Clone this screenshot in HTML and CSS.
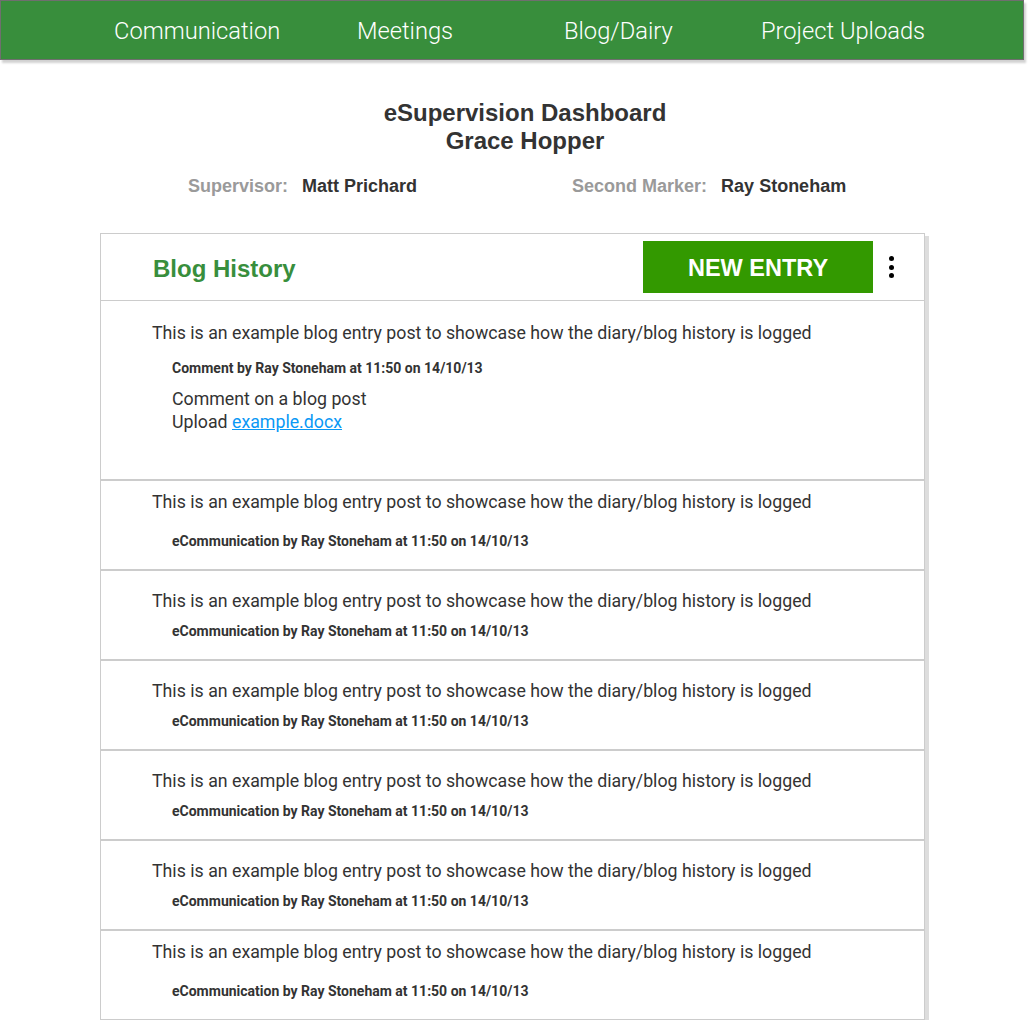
FILE: index.html
```html
<!DOCTYPE html>
<html lang="en">
<head>
<meta charset="utf-8">
<title>eSupervision Dashboard</title>
<link rel="stylesheet" href="styles.css">
</head>
<body>
<nav class="topnav">
  <a class="nav-item" href="#">Communication</a>
  <a class="nav-item" href="#">Meetings</a>
  <a class="nav-item" href="#">Blog/Dairy</a>
  <a class="nav-item" href="#">Project Uploads</a>
</nav>

<header class="page-head">
  <h1 class="title">eSupervision Dashboard<br>Grace Hopper</h1>
  <div class="people">
    <div class="person"><span class="label">Supervisor:</span><span class="name">Matt Prichard</span></div>
    <div class="person"><span class="label">Second Marker:</span><span class="name">Ray Stoneham</span></div>
  </div>
</header>

<section class="card">
  <div class="card-head">
    <h2 class="card-title">Blog History</h2>
    <button class="btn-new">NEW ENTRY</button>
    <div class="kebab"><span class="dot"></span><span class="dot"></span><span class="dot"></span></div>
  </div>

  <article class="entry entry-first">
    <p class="entry-text">This is an example blog entry post to showcase how the diary/blog history is logged</p>
    <p class="entry-meta">Comment by Ray Stoneham at 11:50 on 14/10/13</p>
    <div class="comment">
      <p>Comment on a blog post</p>
      <p>Upload <a href="#" class="file-link">example.docx</a></p>
    </div>
  </article>

  <article class="entry entry-loose">
    <p class="entry-text">This is an example blog entry post to showcase how the diary/blog history is logged</p>
    <p class="entry-meta">eCommunication by Ray Stoneham at 11:50 on 14/10/13</p>
  </article>

  <article class="entry entry-tight">
    <p class="entry-text">This is an example blog entry post to showcase how the diary/blog history is logged</p>
    <p class="entry-meta">eCommunication by Ray Stoneham at 11:50 on 14/10/13</p>
  </article>

  <article class="entry entry-tight">
    <p class="entry-text">This is an example blog entry post to showcase how the diary/blog history is logged</p>
    <p class="entry-meta">eCommunication by Ray Stoneham at 11:50 on 14/10/13</p>
  </article>

  <article class="entry entry-tight">
    <p class="entry-text">This is an example blog entry post to showcase how the diary/blog history is logged</p>
    <p class="entry-meta">eCommunication by Ray Stoneham at 11:50 on 14/10/13</p>
  </article>

  <article class="entry entry-tight">
    <p class="entry-text">This is an example blog entry post to showcase how the diary/blog history is logged</p>
    <p class="entry-meta">eCommunication by Ray Stoneham at 11:50 on 14/10/13</p>
  </article>

  <article class="entry entry-loose entry-last">
    <p class="entry-text">This is an example blog entry post to showcase how the diary/blog history is logged</p>
    <p class="entry-meta">eCommunication by Ray Stoneham at 11:50 on 14/10/13</p>
  </article>
</section>
</body>
</html>
```

FILE: styles.css
```css
* { box-sizing: border-box; }

html, body {
  margin: 0;
  padding: 0;
  background: #ffffff;
}

body {
  font-family: Roboto, "Liberation Sans", Arial, sans-serif;
  color: #333333;
}

p { margin: 0; }

/* ---------- top navigation ---------- */
.topnav {
  width: 1024px;
  height: 60px;
  background: #388e3c;
  border: 1px solid #6f6f6f;
  box-shadow: 2px 3px 2px rgba(0, 0, 0, 0.18);
  display: grid;
  grid-template-columns: 243px 207px 197px auto;
  padding-left: 113px;
  align-items: center;
}

.nav-item {
  font-family: Roboto, "Liberation Sans", sans-serif;
  font-weight: 300;
  font-size: 23.7px;
  line-height: 58px;
  color: #ffffff;
  text-decoration: none;
  white-space: nowrap;
  padding-top: 1px;
}

/* ---------- page heading ---------- */
.page-head {
  margin-top: 39px;
}

.title {
  margin: 0;
  width: 1050px;
  text-align: center;
  font-family: "Liberation Sans", Arial, sans-serif;
  font-weight: 700;
  font-size: 24px;
  line-height: 28px;
  color: #333333;
}

.people {
  display: flex;
  gap: 155px;
  padding-left: 188px;
  margin-top: 20px;
  font-family: "Liberation Sans", Arial, sans-serif;
  font-weight: 700;
  font-size: 18px;
  line-height: 22px;
}

.label {
  color: #9a9a9a;
  margin-right: 14px;
}

.name {
  color: #333333;
}

/* ---------- card ---------- */
.card {
  width: 825px;
  margin: 36px 0 0 100px;
  border: 1px solid #cccccc;
  box-shadow: 4px 3px 0 #dddddd;
  background: #ffffff;
}

.card-head {
  display: flex;
  align-items: center;
  height: 67px;
  padding: 0 15px 0 52px;
  border-bottom: 1px solid #cccccc;
}

.card-title {
  flex: 1;
  margin: 0;
  padding-top: 3px;
  font-family: "Liberation Sans", Arial, sans-serif;
  font-weight: 700;
  font-size: 24px;
  line-height: 28px;
  color: #388e3c;
}

.btn-new {
  width: 230px;
  height: 52px;
  border: none;
  background: #339900;
  color: #ffffff;
  font-family: "Liberation Sans", Arial, sans-serif;
  font-weight: 700;
  font-size: 23.5px;
  padding: 2px 0 0;
  cursor: pointer;
}

.kebab {
  width: 36px;
  display: flex;
  flex-direction: column;
  align-items: center;
  gap: 3.5px;
}

.dot {
  width: 5px;
  height: 5px;
  border-radius: 50%;
  background: #000000;
}

/* ---------- entries ---------- */
.entry {
  height: 90px;
  padding-left: 51px;
  border-bottom: 2px solid #cccccc;
}

.entry-text {
  font-size: 17.75px;
  line-height: 24px;
  color: #333333;
}

.entry-meta {
  padding-left: 20px;
  font-size: 14px;
  font-weight: 700;
  line-height: 20px;
  color: #333333;
}

.entry-first {
  height: 180px;
  padding-top: 20px;
}

.entry-first .entry-meta {
  margin-top: 13px;
}

.comment {
  padding-left: 20px;
  margin-top: 10px;
  font-size: 17.75px;
  line-height: 23px;
}

.file-link {
  color: #0a98f5;
  text-decoration: underline;
}

.entry-loose {
  padding-top: 9px;
}

.entry-loose .entry-meta {
  margin-top: 17px;
}

.entry-tight {
  padding-top: 18px;
}

.entry-tight .entry-meta {
  margin-top: 8px;
}

.entry-last {
  height: 88px;
  border-bottom: none;
}
```
